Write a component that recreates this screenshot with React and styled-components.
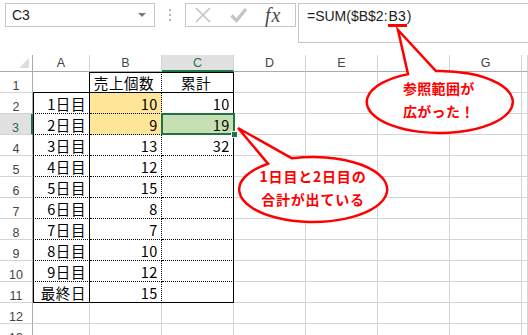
import React from 'react'
import styled, { createGlobalStyle, css } from 'styled-components'

const GREEN = '#217346'
const RED = '#ff0000'

const GlobalStyle = createGlobalStyle`
  html, body { margin: 0; padding: 0; background: #fff; overflow: hidden; }
  body { font-family: "Liberation Sans", "Noto Sans CJK JP", sans-serif; }
`

const lines = {
  grid: '1px solid #d4d4d4',
  solid: '1px solid #000',
  dot: '1px dotted #000',
}

const columns = ['A', 'B', 'C', 'D', 'E', 'F', 'G', '']

const rows = [
  ['', '売上個数', '累計'],
  ['1日目', 10, 10],
  ['2日目', 9, 19],
  ['3日目', 13, 32],
  ['4日目', 12, ''],
  ['5日目', 15, ''],
  ['6日目', 8, ''],
  ['7日目', 7, ''],
  ['8日目', 10, ''],
  ['9日目', 12, ''],
  ['最終日', 15, ''],
  [],
  [],
]

const Page = styled.div`
  position: relative;
  width: 528px;
  height: 335px;
  overflow: hidden;
  background: #fff;
`

/* ---------- formula bar ---------- */

const TopBar = styled.div`
  height: 55px;
  box-sizing: border-box;
  padding: 3px 0 0 5px;
  display: flex;
  align-items: flex-start;
`

const NameBox = styled.div`
  width: 150px;
  height: 24px;
  box-sizing: border-box;
  border: 1px solid #c6c6c6;
  display: flex;
  align-items: center;
  justify-content: space-between;
  padding: 0 8px 0 6px;
  font-size: 14px;
  color: #222;
`

const DropArrow = styled.span`
  width: 0;
  height: 0;
  border-left: 4px solid transparent;
  border-right: 4px solid transparent;
  border-top: 4px solid #7a7a7a;
`

const Grip = styled.div`
  width: 30px;
  height: 24px;
  display: flex;
  flex-direction: column;
  align-items: center;
  justify-content: center;
  gap: 3px;
  span {
    width: 2px;
    height: 2px;
    background: #b5b5b5;
  }
`

const ButtonsBox = styled.div`
  width: 111px;
  height: 24px;
  box-sizing: border-box;
  border: 1px solid #c6c6c6;
  display: flex;
  align-items: center;
  padding-left: 9px;
`

const IconSlot = styled.div`
  display: flex;
  align-items: center;
  margin-right: ${p => p.$gap}px;
`

const Fx = styled.span`
  font-family: "Liberation Serif", serif;
  font-style: italic;
  font-size: 20px;
  color: #4a4a4a;
  letter-spacing: 1px;
  line-height: 22px;
`

const FormulaBox = styled.div`
  flex: 1;
  margin-left: 2px;
  height: 40px;
  box-sizing: border-box;
  border: 1px solid #c6c6c6;
  border-right: none;
  padding: 4px 0 0 8px;
  font-size: 14px;
  line-height: 16px;
  color: #222;
`

const RefMark = styled.span`
  display: inline-block;
  border-bottom: 3px solid ${RED};
  padding: 0 1px;
  line-height: 16px;
`

/* ---------- sheet ---------- */

const Sheet = styled.div`
  display: grid;
  grid-template-columns: 33px 57px repeat(6, 72px) 1fr;
  grid-template-rows: 17px repeat(13, 21px);
`

const Corner = styled.div`
  position: relative;
  box-sizing: border-box;
  border-right: 1px solid #ababab;
  border-bottom: 1px solid #ababab;
  &::after {
    content: '';
    position: absolute;
    right: 3px;
    bottom: 3px;
    border-left: 10px solid transparent;
    border-bottom: 10px solid #dcdcdc;
  }
`

const ColHead = styled.div`
  box-sizing: border-box;
  border-right: 1px solid #d4d4d4;
  border-bottom: 1px solid #ababab;
  text-align: center;
  font-size: 12.5px;
  line-height: 17px;
  color: #444;
  ${p => p.$active && css`
    background: #e1e1e1;
    color: ${GREEN};
    border-bottom: 2px solid ${GREEN};
  `}
`

const RowHead = styled.div`
  box-sizing: border-box;
  border-right: 1px solid #ababab;
  border-bottom: 1px solid #d4d4d4;
  text-align: center;
  font-size: 12.5px;
  line-height: 14px;
  padding-top: 7px;
  color: #444;
  ${p => p.$active && css`
    background: #e1e1e1;
    color: ${GREEN};
    border-right: 2px solid ${GREEN};
  `}
`

const Cell = styled.div`
  position: relative;
  box-sizing: border-box;
  border-right: ${p => lines[p.$rb]};
  border-bottom: ${p => lines[p.$bb]};
  background: ${p => p.$fill || '#fff'};
  box-shadow: ${p => p.$shadow || 'none'};
  text-align: ${p => p.$align};
  padding: 3px 3px 0 0;
  font-family: "Noto Sans CJK JP", sans-serif;
  font-size: 14.5px;
  line-height: 16px;
  letter-spacing: 0.6px;
  color: #000;
  white-space: nowrap;
  ${p => p.$selected && css`
    z-index: 2;
    &::after {
      content: '';
      position: absolute;
      left: -1px;
      top: -1px;
      right: -2px;
      bottom: -1px;
      border: 2px solid ${GREEN};
    }
    &::before {
      content: '';
      position: absolute;
      right: -5px;
      bottom: -4px;
      width: 5px;
      height: 5px;
      background: ${GREEN};
      border: 1px solid #fff;
      z-index: 3;
    }
  `}
`

/* ---------- callouts ---------- */

const Overlay = styled.svg`
  position: absolute;
  left: 0;
  top: 0;
  z-index: 5;
  pointer-events: none;
`

const CalloutText = styled.div`
  position: absolute;
  z-index: 6;
  font-family: "Noto Sans CJK JP", sans-serif;
  font-weight: bold;
  font-size: 14px;
  line-height: 23px;
  color: ${RED};
  white-space: nowrap;
  text-align: ${p => p.$align || 'left'};
  letter-spacing: ${p => p.$spacing || 0}px;
`

const cellProps = (r, c) => {
  const inTable = r >= 1 && r <= 11 && c <= 2
  if (!inTable) return { $rb: 'grid', $bb: 'grid', $align: 'right' }
  const p = {
    $rb: c === 1 ? 'dot' : 'solid',
    $bb: r === 1 || r === 11 ? 'solid' : 'dot',
    $align: r === 1 ? 'center' : 'right',
  }
  if (r === 1 && c > 0) p.$shadow = 'inset 0 1px 0 #000'
  if (r >= 2 && c === 0) p.$shadow = 'inset 1px 0 0 #000'
  if (c === 1 && (r === 2 || r === 3)) p.$fill = '#ffe699'
  if (c === 2 && r === 3) {
    p.$fill = '#c6e0b4'
    p.$selected = true
  }
  return p
}

export default function App() {
  return (
    <Page>
      <GlobalStyle />
      <TopBar>
        <NameBox>
          C3
          <DropArrow />
        </NameBox>
        <Grip>
          <span />
          <span />
          <span />
        </Grip>
        <ButtonsBox>
          <IconSlot $gap={19}>
            <svg width="16" height="16" viewBox="0 0 16 16">
              <path d="M1 1 L15 15 M15 1 L1 15" stroke="#c4c4c4" strokeWidth="1.6" fill="none" />
            </svg>
          </IconSlot>
          <IconSlot $gap={18}>
            <svg width="17" height="16" viewBox="0 0 17 16">
              <path d="M1.5 8.5 L6.5 13.5 L16 2" stroke="#c4c4c4" strokeWidth="3.2" fill="none" />
            </svg>
          </IconSlot>
          <Fx>fx</Fx>
        </ButtonsBox>
        <FormulaBox>
          =SUM($B$2:<RefMark>B3</RefMark>)
        </FormulaBox>
      </TopBar>

      <Sheet>
        <Corner />
        {columns.map((col, i) => (
          <ColHead key={i} $active={col === 'C'}>{col}</ColHead>
        ))}
        {rows.map((row, ri) => {
          const r = ri + 1
          return (
            <React.Fragment key={r}>
              <RowHead $active={r === 3}>{r}</RowHead>
              {columns.map((_, c) => (
                <Cell key={c} {...cellProps(r, c)}>
                  {row[c] !== undefined ? row[c] : ''}
                </Cell>
              ))}
            </React.Fragment>
          )
        })}
      </Sheet>

      <Overlay width="528" height="335" viewBox="0 0 528 335">
        <path
          d="M436 71.05 L398 30 L408 74.1 A73 31 0 1 0 436 71.05 Z"
          fill="#fff"
          stroke={RED}
          strokeWidth="2.5"
          strokeLinejoin="miter"
        />
        <path
          d="M292 158.3 L238 128 L268 163.7 A74 32.5 0 1 0 292 158.3 Z"
          fill="#fff"
          stroke={RED}
          strokeWidth="2.5"
          strokeLinejoin="miter"
        />
      </Overlay>
      <CalloutText $spacing={0.3} style={{ left: 403, top: 77 }}>
        参照範囲が
        <br />
        広がった！
      </CalloutText>
      <CalloutText $align="center" $spacing={0.8} style={{ left: 243, top: 165, width: 140 }}>
        1日目と2日目の
        <br />
        合計が出ている
      </CalloutText>
    </Page>
  )
}
